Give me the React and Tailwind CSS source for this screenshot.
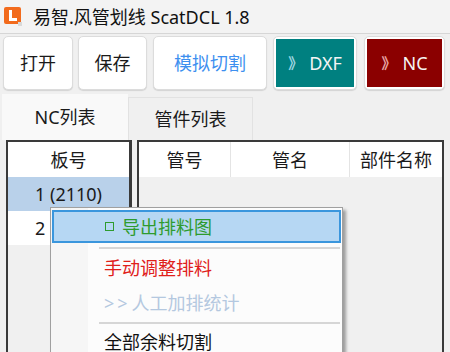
const font = { fontFamily: '"Noto Sans", "Noto Sans CJK SC", sans-serif' };

function ToolButton({ children, className }) {
  return (
    <button
      className={`h-[54px] rounded-[5px] border border-[#dcdcdc] bg-white shadow-[0_1px_1px_rgba(0,0,0,0.12)] text-[18px] leading-none ${className}`}
    >
      {children}
    </button>
  );
}

function ColorButton({ label, bg, arrow, className }) {
  return (
    <div
      className={`h-[54px] rounded-[5px] border border-[#dcdcdc] bg-white p-[2px] shadow-[0_1px_1px_rgba(0,0,0,0.12)] ${className}`}
    >
      <div
        className={`flex h-full items-center justify-center gap-[6px] ${bg} text-[18px] leading-none text-[#f4f4f4]`}
      >
        <span className={`text-[15px] font-bold ${arrow}`}>》</span>
        <span>{label}</span>
      </div>
    </div>
  );
}

export default function App() {
  return (
    <div className="relative h-[352px] w-[450px] overflow-hidden bg-[#f0f0f0] text-[#1a1a1a]" style={font}>
      {/* title bar */}
      <div className="flex h-[34px] items-center gap-[11px] border-b border-[#d6d6d6] bg-[#f3f3f3] pl-[4px]">
        <svg width="18" height="19" viewBox="0 0 18 19">
          <rect x="0" y="0" width="17" height="17" rx="2" fill="#f26b1d" />
          <path d="M5 3 H8 V11 H13 V14 H5 Z" fill="#fff" />
          <rect x="14" y="15" width="4" height="4" fill="#d9d9d9" />
        </svg>
        <span className="text-[18px] leading-none text-[#111]">易智.风管划线 ScatDCL 1.8</span>
      </div>

      {/* toolbar */}
      <div className="flex items-center pl-[3px] pt-[2px]">
        <ToolButton className="w-[70px]">打开</ToolButton>
        <ToolButton className="ml-[5px] w-[69px]">保存</ToolButton>
        <ToolButton className="ml-[6px] w-[114px] text-[#3d8fef]">模拟切割</ToolButton>
        <ColorButton className="ml-[6px] w-[84px]" label="DXF" bg="bg-[#008080]" arrow="text-[#9fd6e0]" />
        <ColorButton className="ml-[7px] w-[81px]" label="NC" bg="bg-[#8b0000]" arrow="text-[#e8a8a8]" />
      </div>

      {/* tabs */}
      <div className="mt-[4px] flex items-end pl-[2px]">
        <div className="flex h-[46px] w-[126px] items-center justify-center bg-[#f9f9f9] text-[18px] leading-none">
          NC列表
        </div>
        <div className="flex h-[43px] w-[125px] items-center justify-center border border-b-0 border-[#e2e2e2] bg-[#f0f0f0] text-[18px] leading-none">
          管件列表
        </div>
      </div>

      {/* tables */}
      <div className="flex h-[220px] items-start gap-[5px] pl-[6px]">
        <div className="h-full w-[126px] border-2 border-r-[3px] border-[#3a3a3a] bg-[#f0f0f0]">
          <div className="flex h-[35px] items-center justify-center bg-white text-[18px] leading-none">板号</div>
          <div className="flex h-[34px] items-center justify-center bg-[#b9d1ea] text-[18px] leading-none">1 (2110)</div>
          <div className="flex h-[34px] items-center justify-center bg-white text-[18px] leading-none">2 (2110)</div>
        </div>
        <div className="h-full w-[307px] border-2 border-[#3a3a3a] bg-[#f0f0f0]">
          <div className="flex h-[35px] items-center bg-white text-[18px] leading-none">
            <div className="flex h-full w-[92px] items-center justify-center border-r border-[#e4e4e4]">管号</div>
            <div className="flex h-full w-[119px] items-center justify-center border-r border-[#e4e4e4]">管名</div>
            <div className="flex h-full flex-1 items-center justify-center whitespace-nowrap">部件名称</div>
          </div>
        </div>
      </div>

      {/* context menu */}
      <div className="absolute left-[50px] top-[207px] h-[160px] w-[293px] border border-[#a0a0a0] bg-[#fcfcfc] shadow-[3px_3px_3px_rgba(0,0,0,0.35)]">
        <div className="absolute bottom-0 left-0 top-0 w-[37px] bg-[#f6f6f6]" />
        <div className="relative pt-[2px]">
          <div className="mx-[1px] flex h-[33px] items-center border-2 border-[#3a96dd] bg-[#b6d7f3] pl-[51px] text-[18px] leading-none text-[#2e9b2e]">
            <span className="mr-[8px] inline-block h-[9px] w-[9px] border border-[#2e9b2e]" />
            导出排料图
          </div>
          <div className="ml-[48px] mr-[2px] mt-[4px] h-[2px] bg-[#d6d6d6]" />
          <div className="flex h-[38px] items-center pl-[53px] text-[18px] leading-none text-[#e0201a]">手动调整排料</div>
          <div className="flex h-[32px] items-center pl-[53px] text-[18px] leading-none text-[#b4c8e0]">
            <span className="mr-[1px] tracking-[3px]">&gt;&gt;</span>人工加排统计
          </div>
          <div className="ml-[48px] mr-[2px] mt-[3px] h-[2px] bg-[#d6d6d6]" />
          <div className="flex h-[36px] items-center pl-[53px] text-[18px] leading-none text-[#111]">全部余料切割</div>
        </div>
      </div>
    </div>
  );
}
